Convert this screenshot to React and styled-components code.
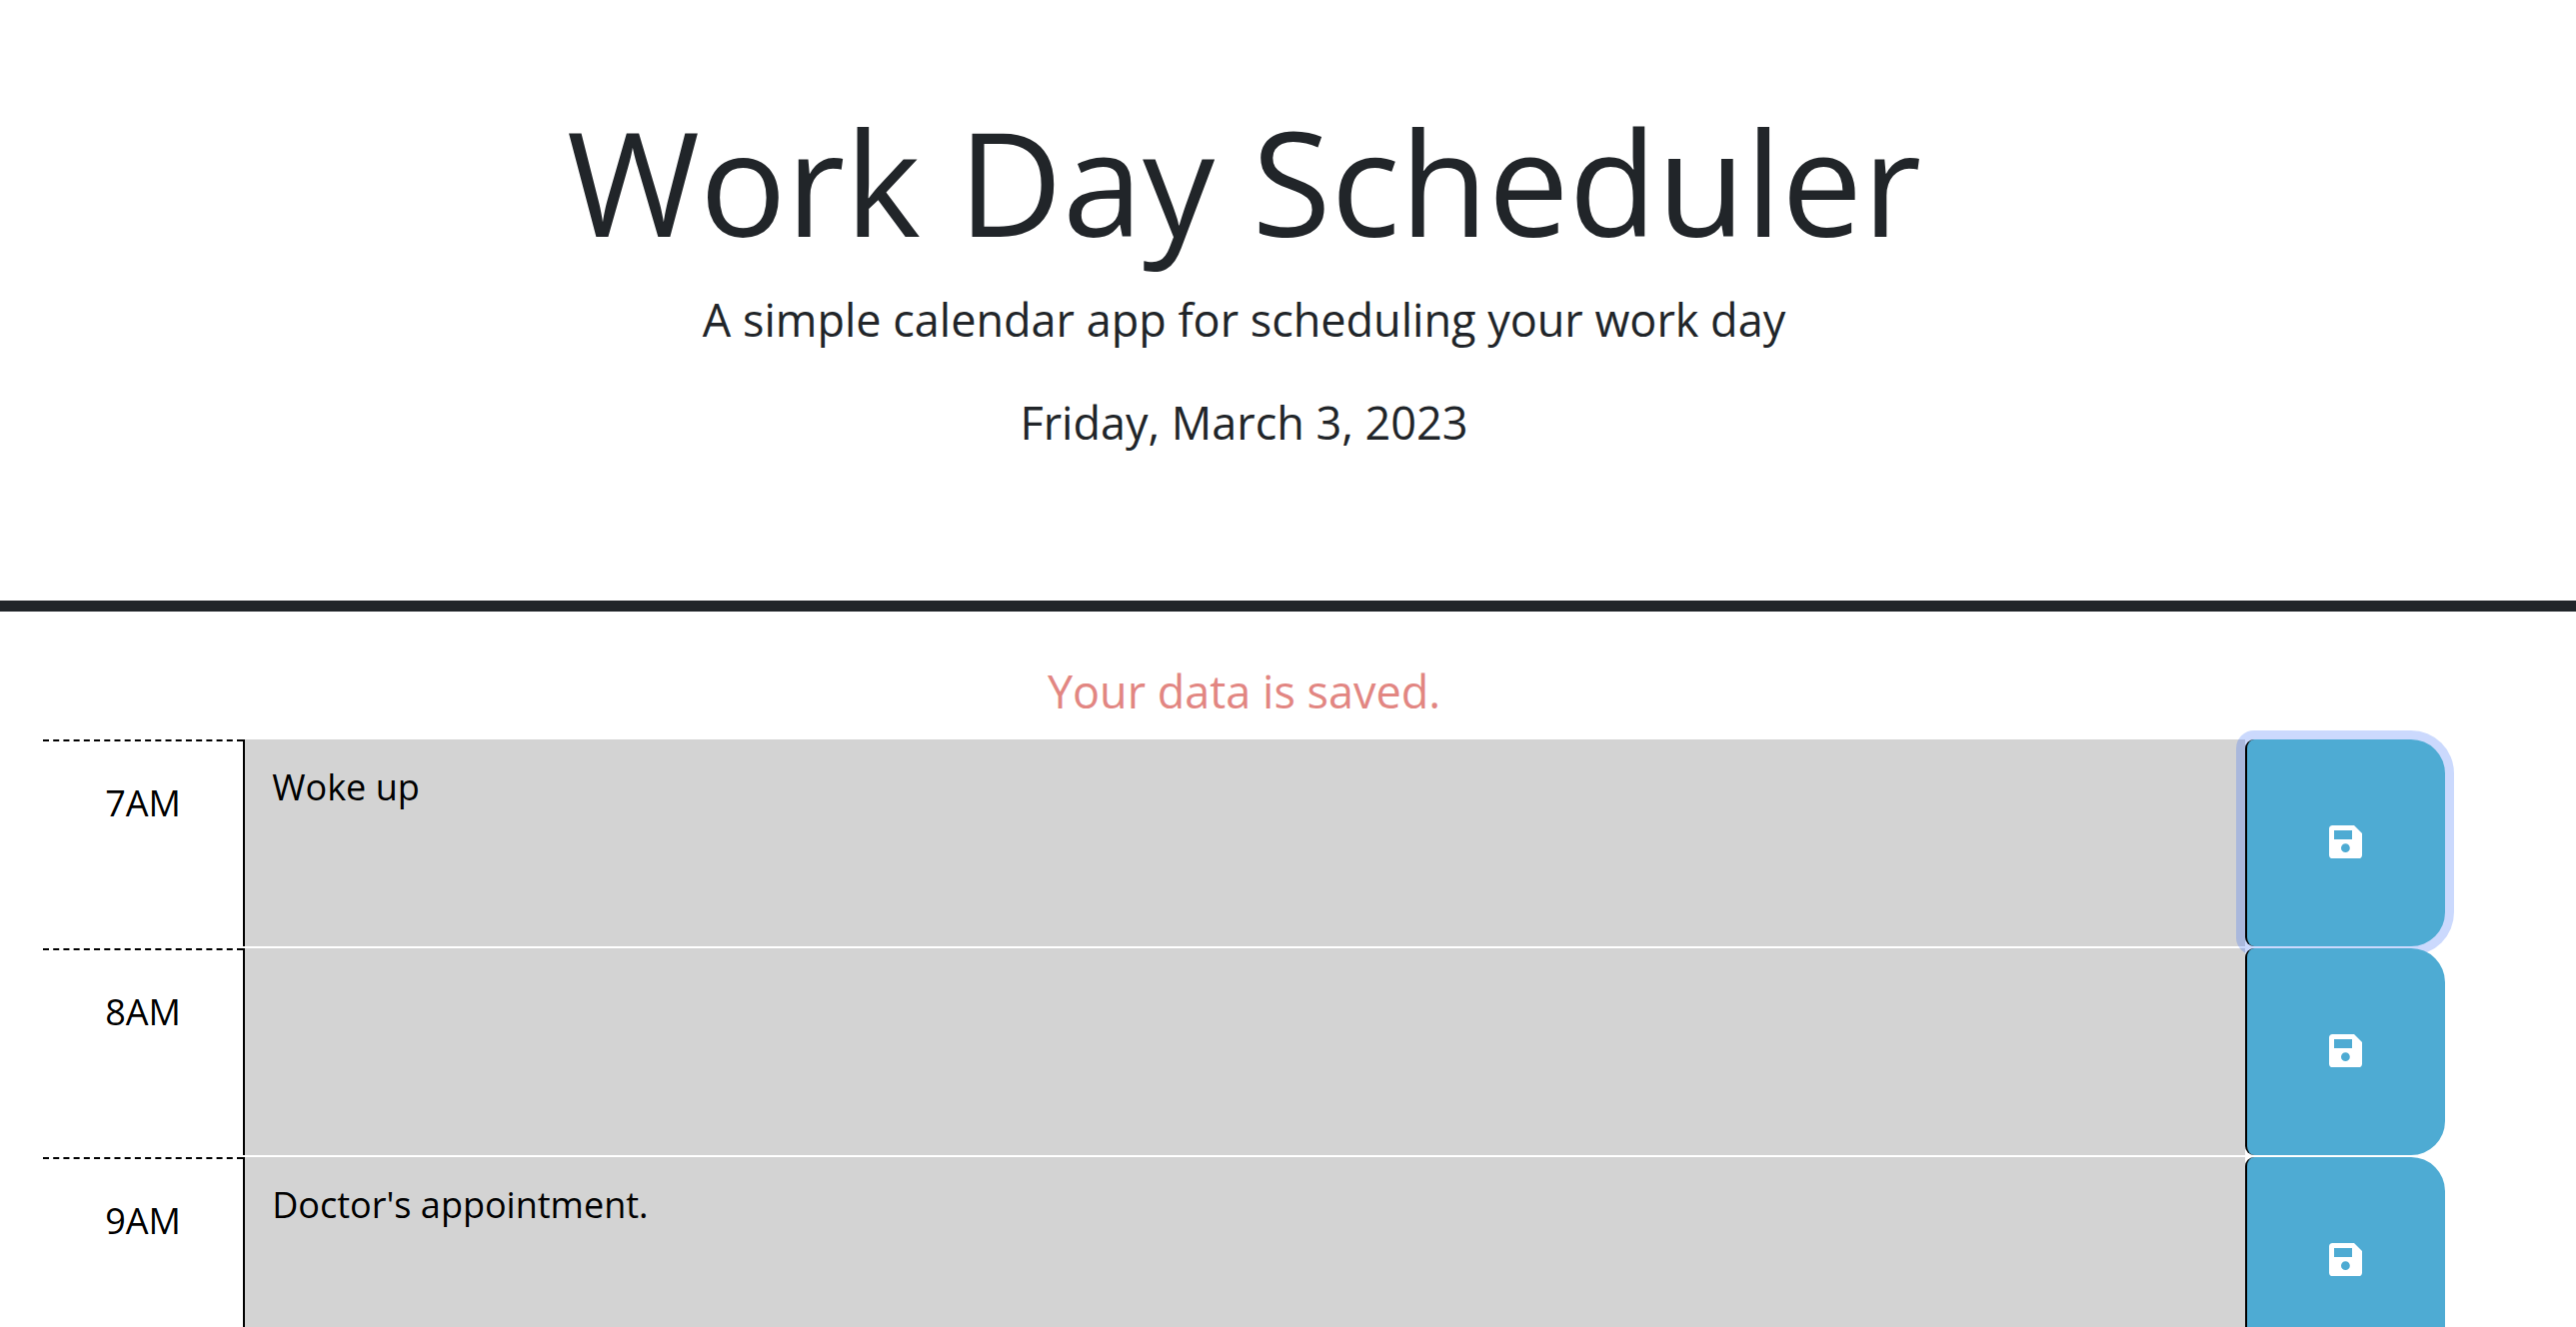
import React, { useState } from "react";
import styled, { createGlobalStyle } from "styled-components";

const GlobalStyle = createGlobalStyle`
  *, *::before, *::after { box-sizing: border-box; }
  body {
    margin: 0;
    background: #fff;
    color: #212529;
    font-family: "Open Sans", "Noto Sans", sans-serif;
    font-size: 36px;
    line-height: 54px;
  }
`;

const Page = styled.div`
  height: 100vh;
  overflow-y: auto;
  scrollbar-width: none;
`;

const Header = styled.header`
  padding: 95px 131px 144px 43px;
  border-bottom: 11px solid #212529;
  text-align: center;
`;

const Title = styled.h1`
  margin: 0 0 18px;
  font-size: 144px;
  line-height: 173px;
  font-weight: 400;
`;

const Lead = styled.p`
  margin: 0;
  font-size: 45px;
  line-height: 68px;
  color: ${(p) => (p.$notice ? "#e28682" : "inherit")};

  & + & {
    margin-top: 35px;
  }
`;

const Schedule = styled.main`
  padding: 46px 131px 46px 43px;
  text-align: center;
`;

const Blocks = styled.div`
  display: grid;
  gap: 2px;
  margin-top: 14px;
`;

const TimeBlock = styled.div`
  display: grid;
  grid-template-columns: 1fr 10fr 1fr;
  min-height: 207px;
`;

const Hour = styled.label`
  padding-top: 35px;
  border-top: 2px dashed #000;
  color: #000;
`;

const Description = styled.textarea`
  display: block;
  width: 100%;
  margin: 0;
  padding: 21px 27px;
  border: 0;
  border-left: 2px solid #000;
  border-radius: 0;
  outline: 0;
  resize: none;
  background: #d3d3d3;
  color: #000;
  font: inherit;
`;

const SaveButton = styled.button`
  position: relative;
  display: flex;
  align-items: center;
  justify-content: center;
  padding: 0 0 2px;
  border: 0;
  border-left: 2px solid #000;
  border-radius: 9px 34px 34px 9px;
  background: #4eabd3;
  color: #fff;
  cursor: pointer;
  box-shadow: ${(p) => (p.$active ? "0 0 0 9px rgba(49, 102, 246, 0.25)" : "none")};
`;

function SaveIcon() {
  return (
    <svg width="33" height="33" viewBox="0 0 33 33" fill="currentColor" aria-hidden="true">
      <path
        fillRule="evenodd"
        d="M3.6 0H25L33 8V29.4A3.6 3.6 0 0 1 29.4 33H3.6A3.6 3.6 0 0 1 0 29.4V3.6A3.6 3.6 0 0 1 3.6 0ZM5 5V14H23V5ZM16.4 18.3A4.4 4.4 0 1 0 16.4 27.1A4.4 4.4 0 1 0 16.4 18.3Z"
      />
    </svg>
  );
}

const initialEntries = [
  { hour: "7AM", text: "Woke up" },
  { hour: "8AM", text: "" },
  { hour: "9AM", text: "Doctor's appointment." },
];

export default function App() {
  const [entries, setEntries] = useState(initialEntries);
  const [saved, setSaved] = useState("7AM");

  const update = (hour, text) =>
    setEntries((list) => list.map((e) => (e.hour === hour ? { ...e, text } : e)));

  return (
    <Page>
      <GlobalStyle />
      <Header>
        <Title>Work Day Scheduler</Title>
        <Lead>A simple calendar app for scheduling your work day</Lead>
        <Lead>Friday, March 3, 2023</Lead>
      </Header>
      <Schedule>
        <Lead $notice role="status">Your data is saved.</Lead>
        <Blocks>
          {entries.map(({ hour, text }) => (
            <TimeBlock key={hour}>
              <Hour htmlFor={`entry-${hour}`}>{hour}</Hour>
              <Description
                id={`entry-${hour}`}
                value={text}
                spellCheck={false}
                onChange={(e) => update(hour, e.target.value)}
              />
              <SaveButton
                type="button"
                aria-label={`Save ${hour}`}
                $active={saved === hour}
                onClick={() => setSaved(hour)}
              >
                <SaveIcon />
              </SaveButton>
            </TimeBlock>
          ))}
        </Blocks>
      </Schedule>
    </Page>
  );
}
